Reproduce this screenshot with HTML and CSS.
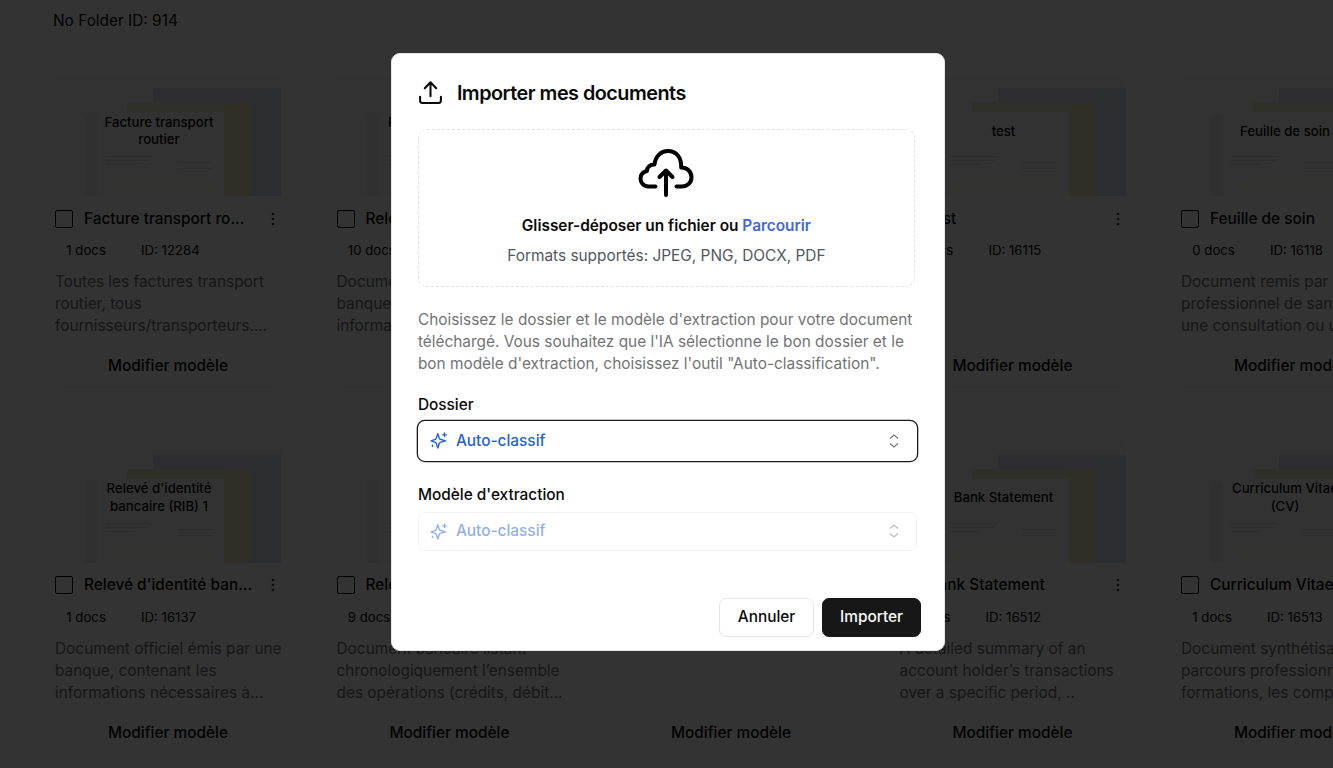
FILE: index.html
```html
<!DOCTYPE html>
<html lang="fr">
<head>
    <meta charset="UTF-8">
    <meta name="viewport" content="width=device-width, initial-scale=1.0">
    <title>Importer mes documents</title>
    <link rel="stylesheet" href="styles.css">
</head>
<body>
    <svg width="0" height="0" class="sprite">
        <symbol id="papers" viewBox="0 0 226 122">
            <rect width="226" height="122" fill="#f7f7f7"/>
            <rect x="98" y="14" width="128" height="14" fill="#e2e2f6"/>
            <rect x="196" y="14" width="30" height="108" fill="#dde0f6"/>
            <rect x="72" y="28" width="124" height="94" fill="#efefd4"/>
            <rect x="169" y="28" width="27" height="94" fill="#ebebc0"/>
            <rect x="30" y="40" width="12" height="82" fill="#f1f1f1"/>
            <rect x="42" y="38" width="127" height="84" fill="#fbfbfb"/>
            <path d="M50 82.500h48M50 86.500h44M50 90.500h30M122 88.500h34M122 94.500h34" stroke="#dcdcdc"/>
            <rect x="56" y="108" width="100" height="10" fill="#f7f7e9"/>
        </symbol>
        <symbol id="dots" viewBox="0 0 4 14">
            <circle cx="2" cy="2" r="1.300"/><circle cx="2" cy="7" r="1.300"/><circle cx="2" cy="12" r="1.300"/>
        </symbol>
        <symbol id="sparkles" viewBox="0 0 24 24">
            <path d="M11 2.500 13.200 9Q13.500 10 14.500 10.300L22 12.500 14.500 14.700Q13.500 15 13.200 16L11 22.500 8.800 16Q8.500 15 7.500 14.700L1.500 12.500 7.500 10.300Q8.500 10 8.800 9Z"/>
            <path d="M20.500 1.500v5M18 4h5M3.500 18.500v2"/>
        </symbol>
        <symbol id="updown" viewBox="0 0 12 16">
            <path d="M2 5.500 6 2l4 3.500M2 10.500 6 14l4-3.500"/>
        </symbol>
    </svg>

    <main class="page">
        <div class="folder-id">No Folder ID: 914</div>

        <div class="grid">
            <div class="card">
                <div class="thumb"><svg><use href="#papers"/></svg><span>Facture transport routier</span></div>
                <div class="title-row"><i class="check"></i><h3>Facture transport ro...</h3><svg class="dots"><use href="#dots"/></svg></div>
                <div class="badges"><span>1 docs</span><span>ID: 12284</span></div>
                <p>Toutes les factures transport<br>routier, tous<br>fournisseurs/transporteurs....</p>
                <button>Modifier modèle</button>
            </div>
            <div class="card">
                <div class="thumb"><svg><use href="#papers"/></svg><span>Relevé d'identité bancaire</span></div>
                <div class="title-row"><i class="check"></i><h3>Relevé</h3></div>
                <div class="badges"><span>10 docs</span></div>
                <p>Document<br>banque<br>informations</p>
            </div>
            <div class="card">
                <div class="thumb"><svg><use href="#papers"/></svg></div>
            </div>
            <div class="card">
                <div class="thumb"><svg><use href="#papers"/></svg><span>test</span></div>
                <div class="title-row"><i class="check"></i><h3>test</h3><svg class="dots"><use href="#dots"/></svg></div>
                <div class="badges"><span>0 docs</span><span>ID: 16115</span></div>
                <p></p>
                <button>Modifier modèle</button>
            </div>
            <div class="card">
                <div class="thumb"><svg><use href="#papers"/></svg><span>Feuille de soin</span></div>
                <div class="title-row"><i class="check"></i><h3>Feuille de soin</h3><svg class="dots"><use href="#dots"/></svg></div>
                <div class="badges"><span>0 docs</span><span>ID: 16118</span></div>
                <p>Document remis par un<br>professionnel de santé<br>une consultation ou un</p>
                <button>Modifier modèle</button>
            </div>

            <div class="card">
                <div class="thumb"><svg><use href="#papers"/></svg><span>Relevé d'identité bancaire (RIB) 1</span></div>
                <div class="title-row"><i class="check"></i><h3>Relevé d'identité ban...</h3><svg class="dots"><use href="#dots"/></svg></div>
                <div class="badges"><span>1 docs</span><span>ID: 16137</span></div>
                <p>Document officiel émis par une<br>banque, contenant les<br>informations nécessaires à...</p>
                <button>Modifier modèle</button>
            </div>
            <div class="card">
                <div class="thumb"><svg><use href="#papers"/></svg></div>
                <div class="title-row"><i class="check"></i><h3>Relevé</h3></div>
                <div class="badges"><span>9 docs</span></div>
                <p>Document bancaire listant<br>chronologiquement l’ensemble<br>des opérations (crédits, débit...</p>
                <button>Modifier modèle</button>
            </div>
            <div class="card">
                <div class="thumb"><svg><use href="#papers"/></svg></div>
                <div class="title-row"></div>
                <div class="badges"></div>
                <p></p>
                <button>Modifier modèle</button>
            </div>
            <div class="card">
                <div class="thumb"><svg><use href="#papers"/></svg><span>Bank Statement</span></div>
                <div class="title-row"><i class="check"></i><h3>Bank Statement</h3><svg class="dots"><use href="#dots"/></svg></div>
                <div class="badges"><span>1 docs</span><span>ID: 16512</span></div>
                <p>A detailed summary of an<br>account holder’s transactions<br>over a specific period, ..</p>
                <button>Modifier modèle</button>
            </div>
            <div class="card">
                <div class="thumb"><svg><use href="#papers"/></svg><span>Curriculum Vitae (CV)</span></div>
                <div class="title-row"><i class="check"></i><h3>Curriculum Vitae (CV)</h3><svg class="dots"><use href="#dots"/></svg></div>
                <div class="badges"><span>1 docs</span><span>ID: 16513</span></div>
                <p>Document synthétisant le<br>parcours professionnel,<br>formations, les compét...</p>
                <button>Modifier modèle</button>
            </div>
        </div>
    </main>

    <div class="overlay">
        <div class="modal">
            <div class="modal-header">
                <svg class="upload-icon" viewBox="0 0 24 24"><path d="M2 16v4q0 2 2 2h16q2 0 2-2v-4M12 15.500V2.500M6.500 8 12 2.200 17.500 8"/></svg>
                <h2>Importer mes documents</h2>
            </div>

            <div class="dropzone">
                <svg class="cloud" viewBox="0 0 56 48"><path d="M17.500 38.500H10.500C5 38.500 2.500 34 2.500 30.500C2.500 27 5 24 9 23C9 19 12 16.500 16.500 16.500C17.500 8 23 3 30 3C38 3 43.500 9 43.200 19.500C49 19.500 53.500 23.500 53.500 29.500C53.500 35 49 38.500 44 38.500H38.500M28 47V22.500M21.500 29 28 22.500l6.500 6.500"/></svg>
                <div class="drop-title">Glisser-déposer un fichier ou <a>Parcourir</a></div>
                <div class="drop-formats">Formats supportés: JPEG, PNG, DOCX, PDF</div>
            </div>

            <p class="intro">Choisissez le dossier et le modèle d'extraction pour votre document<br>téléchargé. Vous souhaitez que l'IA sélectionne le bon dossier et le<br>bon modèle d'extraction, choisissez l'outil "Auto-classification".</p>

            <label>Dossier</label>
            <div class="select focused">
                <svg class="sparkles"><use href="#sparkles"/></svg>
                <span>Auto-classif</span>
                <svg class="updown"><use href="#updown"/></svg>
            </div>

            <label>Modèle d'extraction</label>
            <div class="select disabled">
                <svg class="sparkles"><use href="#sparkles"/></svg>
                <span>Auto-classif</span>
                <svg class="updown"><use href="#updown"/></svg>
            </div>

            <div class="actions">
                <button class="btn">Annuler</button>
                <button class="btn primary">Importer</button>
            </div>
        </div>
    </div>
</body>
</html>
```
FILE: styles.css
```css
* {
    box-sizing: border-box;
}

body {
    margin: 0;
    height: 768px;
    overflow: hidden;
    background: #fff;
    color: #0a0a0a;
    font-family: Inter, "Liberation Sans", sans-serif;
    font-size: 15.4px;
    line-height: 22px;
}

h2, h3, p {
    margin: 0;
}

button {
    font: inherit;
    letter-spacing: inherit;
    color: inherit;
}

.sprite {
    position: absolute;
}

.page {
    height: 768px;
    overflow: hidden;
    padding: 10px 0 0 49px;
}

.folder-id {
    padding-left: 4px;
    height: 64px;
}

.grid {
    display: grid;
    grid-template-columns: repeat(5, 238px);
    column-gap: 43.5px;
    row-gap: 54.5px;
}

.card {
    height: 312px;
    padding: 0 6px;
    border-radius: 8px;
    box-shadow: 0 1px 1px rgba(0, 0, 0, 0.04);
}

.thumb {
    display: grid;
    height: 122px;
}

.thumb svg {
    grid-area: 1 / 1;
    width: 226px;
    height: 122px;
}

.thumb span {
    grid-area: 1 / 1;
    width: 118px;
    height: 36px;
    margin: 39.4px 0 0 45px;
    display: flex;
    align-items: center;
    justify-content: center;
    text-align: center;
    font-size: 13.2px;
    font-weight: 500;
    line-height: 17.5px;
}

.title-row {
    display: flex;
    align-items: center;
    height: 22px;
    margin-top: 11.5px;
}

.check {
    width: 18px;
    height: 18px;
    border: 1px solid #000;
    border-radius: 2px;
}

.title-row h3 {
    width: 171px;
    margin-left: 11px;
    font-size: 15.4px;
    font-weight: 500;
    white-space: nowrap;
    overflow: hidden;
    text-overflow: ellipsis;
}

.dots {
    width: 4px;
    height: 14px;
    margin-left: 16px;
    fill: #444;
}

.badges {
    display: flex;
    gap: 12.5px;
    height: 20px;
    margin-top: 10.5px;
    line-height: 20px;
    font-size: 13.2px;
}

.badges span {
    padding: 0 11.3px;
    border-radius: 10px;
    background: #fdfdfd;
}

.card p {
    height: 66px;
    margin-top: 11px;
    color: #737373;
    white-space: nowrap;
}

.card button {
    display: block;
    width: 100%;
    margin-top: 18.4px;
    padding: 0;
    border: 0;
    background: none;
    font-weight: 500;
}

.overlay {
    position: fixed;
    inset: 0;
    display: flex;
    justify-content: center;
    align-items: flex-start;
    padding-top: 53px;
    padding-left: 2px;
    background: rgba(0, 0, 0, 0.8);
}

.modal {
    width: 554px;
    height: 598px;
    padding: 25px 27.5px 0 26.4px;
    background: #fff;
    border: 1px solid #e5e5e5;
    border-radius: 9px;
}

.modal-header {
    display: flex;
    align-items: center;
    gap: 14px;
    height: 27px;
}

.modal-header h2 {
    font-size: 19.8px;
    font-weight: 600;
    letter-spacing: -0.5px;
}

.upload-icon {
    width: 25px;
    height: 25px;
    fill: none;
    stroke: #0a0a0a;
    stroke-width: 2;
    stroke-linecap: round;
    stroke-linejoin: round;
}

.dropzone {
    display: flex;
    flex-direction: column;
    align-items: center;
    width: 497px;
    height: 158px;
    margin-top: 23px;
    padding-top: 18px;
    border: 1px dashed #e2e2e2;
    border-radius: 9px;
}

.cloud {
    width: 56px;
    height: 48px;
    overflow: visible;
    fill: none;
    stroke: #000;
    stroke-width: 4;
    stroke-linecap: round;
    stroke-linejoin: round;
}

.drop-title {
    margin-top: 19px;
    font-weight: 600;
}

.drop-title a {
    color: #4169d8;
}

.drop-formats {
    margin-top: 8px;
    color: #525860;
}

.intro {
    margin: 22px 0 19px;
    color: #737373;
    white-space: nowrap;
}

label {
    display: block;
    font-weight: 500;
}

.select {
    display: flex;
    align-items: center;
    width: 499px;
    height: 39px;
    margin: 6px 0 23px;
    padding: 0 16px 1px 11px;
    border: 1px solid #e5e5e5;
    border-radius: 7px;
    color: #2563d0;
    font-weight: 500;
}

.select.focused {
    height: 40px;
    margin: 5px 0 23px;
    border-color: transparent;
    box-shadow: 0 0 0 1.3px #1a1a1a;
}

.select.disabled {
    opacity: 0.5;
}

.sparkles {
    width: 17px;
    height: 17px;
    margin-right: 9px;
    fill: none;
    stroke: #2563d0;
    stroke-width: 2;
    stroke-linejoin: round;
    stroke-linecap: round;
}

.updown {
    width: 12px;
    height: 16px;
    margin-left: auto;
    fill: none;
    stroke: #777;
    stroke-width: 1.2;
}

.actions {
    display: flex;
    justify-content: flex-end;
    gap: 8px;
    margin: 47px -5px 0 0;
}

.btn {
    width: 95px;
    height: 39px;
    padding: 0 0 1px;
    border: 1px solid #e5e5e5;
    border-radius: 7px;
    background: #fff;
    font-weight: 500;
}

.btn.primary {
    width: 99px;
    border-color: #171717;
    background: #171717;
    color: #fafafa;
}
```
